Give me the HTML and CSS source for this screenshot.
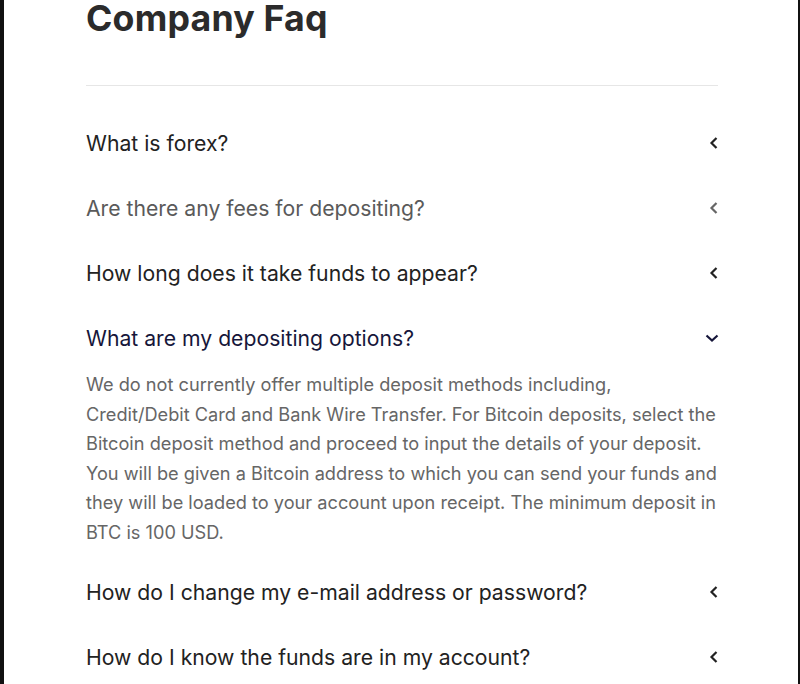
FILE: index.html
```html
<!DOCTYPE html>
<html>
<head>
<meta charset="utf-8">
<link rel="stylesheet" href="styles.css">
</head>
<body>
<div class="frame">
  <main class="faq">
    <h1 class="faq-title">Company Faq</h1>
    <hr class="faq-divider">
    <div class="faq-list">
      <div class="faq-item">
        <div class="faq-q">What is forex?<svg class="chev" viewBox="0 0 10 14" width="10" height="14"><polyline points="7.5,2 2.5,7 7.5,12"/></svg></div>
      </div>
      <div class="faq-item hover">
        <div class="faq-q">Are there any fees for depositing?<svg class="chev" viewBox="0 0 10 14" width="10" height="14"><polyline points="7.5,2 2.5,7 7.5,12"/></svg></div>
      </div>
      <div class="faq-item">
        <div class="faq-q">How long does it take funds to appear?<svg class="chev" viewBox="0 0 10 14" width="10" height="14"><polyline points="7.5,2 2.5,7 7.5,12"/></svg></div>
      </div>
      <div class="faq-item open">
        <div class="faq-q">What are my depositing options?<svg class="chev down" viewBox="0 0 14 10" width="14" height="10"><polyline points="1.5,2.5 7,7.5 12.5,2.5"/></svg></div>
        <p class="faq-a">We do not currently offer multiple deposit methods including, Credit/Debit Card and Bank Wire Transfer. For Bitcoin deposits, select the Bitcoin deposit method and proceed to input the details of your deposit. You will be given a Bitcoin address to which you can send your funds and they will be loaded to your account upon receipt. The minimum deposit in BTC is 100 USD.</p>
      </div>
      <div class="faq-item">
        <div class="faq-q">How do I change my e-mail address or password?<svg class="chev" viewBox="0 0 10 14" width="10" height="14"><polyline points="7.5,2 2.5,7 7.5,12"/></svg></div>
      </div>
      <div class="faq-item">
        <div class="faq-q">How do I know the funds are in my account?<svg class="chev" viewBox="0 0 10 14" width="10" height="14"><polyline points="7.5,2 2.5,7 7.5,12"/></svg></div>
      </div>
    </div>
  </main>
</div>
</body>
</html>
```
FILE: styles.css
```css
html, body {
  margin: 0;
  padding: 0;
  background: #fff;
  height: 100%;
  overflow: hidden;
}
.frame {
  border-left: 4px solid #111;
  border-right: 2px solid #111;
  min-height: 100%;
  box-sizing: border-box;
  font-family: Inter, "Noto Sans", sans-serif;
}
.faq {
  margin-left: 82px;
  width: 632px;
}
.faq-title {
  margin: 0;
  font-size: 35.7px;
  line-height: 36px;
  font-weight: 700;
  color: #2b2b2b;
  letter-spacing: 0.2px;
}
.faq-divider {
  border: 0;
  border-top: 1px solid #e6e6e6;
  margin: 49px 0 24px;
}
.faq-q {
  height: 65px;
  display: flex;
  align-items: center;
  justify-content: space-between;
  font-size: 21.2px;
  color: #222;
}
.chev {
  fill: none;
  stroke: #222;
  stroke-width: 2.2;
  margin-right: -1px;
}
.hover .faq-q { color: #5a5a5a; }
.hover .chev { stroke: #666; }
.open .faq-q { color: #16163a; }
.open .chev { stroke: #16163a; }
.faq-a {
  margin: 0 0 12px;
  font-size: 18.2px;
  line-height: 29.5px;
  color: #666;
}
```
